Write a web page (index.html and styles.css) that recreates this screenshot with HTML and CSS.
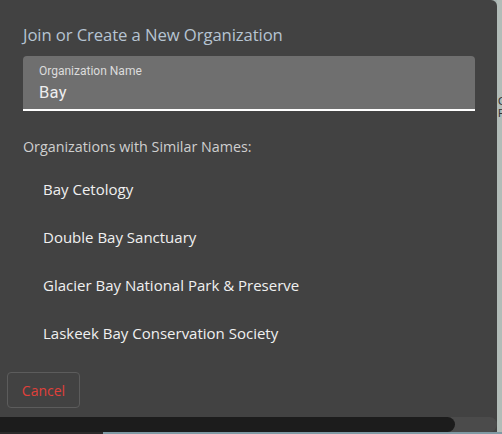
FILE: index.html
```html
<!DOCTYPE html>
<html>
<head>
<meta charset="utf-8">
<link rel="stylesheet" href="styles.css">
</head>
<body>
<div class="page">
  <div class="dialog">
    <div class="content">
      <h2 class="title">Join or Create a New Organization</h2>
      <div class="field">
        <div class="field-label">Organization Name</div>
        <div class="field-value">Bay</div>
      </div>
      <div class="similar-head">Organizations with Similar Names:</div>
      <ul class="orgs">
        <li>Bay Cetology</li>
        <li>Double Bay Sanctuary</li>
        <li>Glacier Bay National Park &amp; Preserve</li>
        <li>Laskeek Bay Conservation Society</li>
      </ul>
    </div>
    <div class="actions">
      <button class="cancel">Cancel</button>
    </div>
    <div class="scrollbar"><div class="thumb"></div><div class="track"></div></div>
  </div>
  <div class="map-strip"><span>C</span><span>F</span></div>
</div>
<div class="bottom-strip"><div class="bs-dark"></div><div class="bs-map"></div></div>
</body>
</html>
```
FILE: styles.css
```css
html, body { margin: 0; padding: 0; }
body {
  width: 502px;
  height: 434px;
  overflow: hidden;
  background: #a9b4b2;
  font-family: "Open Sans", sans-serif;
}
.page {
  display: flex;
  height: 432px;
}
.dialog {
  width: 497px;
  flex: none;
  background: #424242;
  border-top-right-radius: 6px;
  display: flex;
  flex-direction: column;
  box-sizing: border-box;
}
.content {
  padding: 24px 22px 0 23px;
  flex: 1;
}
.title {
  margin: 0;
  font-weight: 400;
  font-size: 16.7px;
  line-height: 22px;
  color: #b6c4d2;
  letter-spacing: -0.1px;
}
.field {
  margin-top: 10px;
  background: #6f6f6f;
  border-radius: 4px 4px 0 0;
  border-bottom: 2px solid #ffffff;
  padding: 8px 16px 0 16px;
  box-sizing: content-box;
  height: 45px;
  font-family: Roboto, sans-serif;
}
.field-label {
  font-size: 12px;
  line-height: 14px;
  color: #dcdcdc;
}
.field-value {
  margin-top: 5px;
  font-size: 16.5px;
  line-height: 20px;
  color: #eeeeee;
  letter-spacing: 0.3px;
}
.similar-head {
  margin-top: 26px;
  font-size: 14.3px;
  line-height: 20px;
  color: #cfcfcf;
}
.orgs {
  list-style: none;
  margin: 8px 0 0 0;
  padding: 0 0 0 20px;
}
.orgs li {
  height: 48px;
  line-height: 20px;
  font-size: 15px;
  color: #f0f0f0;
  padding-top: 14px;
  box-sizing: border-box;
}
.orgs li:last-child { height: 34px; }
.actions {
  padding: 0 0 9px 7px;
}
.cancel {
  width: 73px;
  height: 36px;
  background: transparent;
  border: 1px solid #5c5c5c;
  border-radius: 4px;
  color: #e0403a;
  font-family: "Open Sans", sans-serif;
  font-size: 14px;
  padding: 0;
}
.scrollbar {
  height: 15px;
  display: flex;
  background: #424242;
}
.thumb {
  width: 455px;
  background: #1c1c1c;
  border-radius: 0 8px 8px 0;
  position: relative;
  z-index: 1;
}
.track {
  flex: 1;
  background: #4b4b4b;
  border-radius: 0 8px 8px 0;
  margin-left: -10px;
  position: relative;
  z-index: 0;
}
.map-strip {
  flex: 1;
  display: flex;
  flex-direction: column;
  padding-top: 95px;
  overflow: hidden;
  font-family: "Liberation Sans", sans-serif;
  font-size: 11px;
  line-height: 12px;
  color: #333;
  background: #b2bcb8;
}
.map-strip span { margin-left: 1px; height: 12px; }
.bottom-strip {
  display: flex;
  height: 2px;
}
.bs-dark { width: 103px; background: #2a2a2a; }
.bs-map { flex: 1; background: #7f9aa4; }
```
